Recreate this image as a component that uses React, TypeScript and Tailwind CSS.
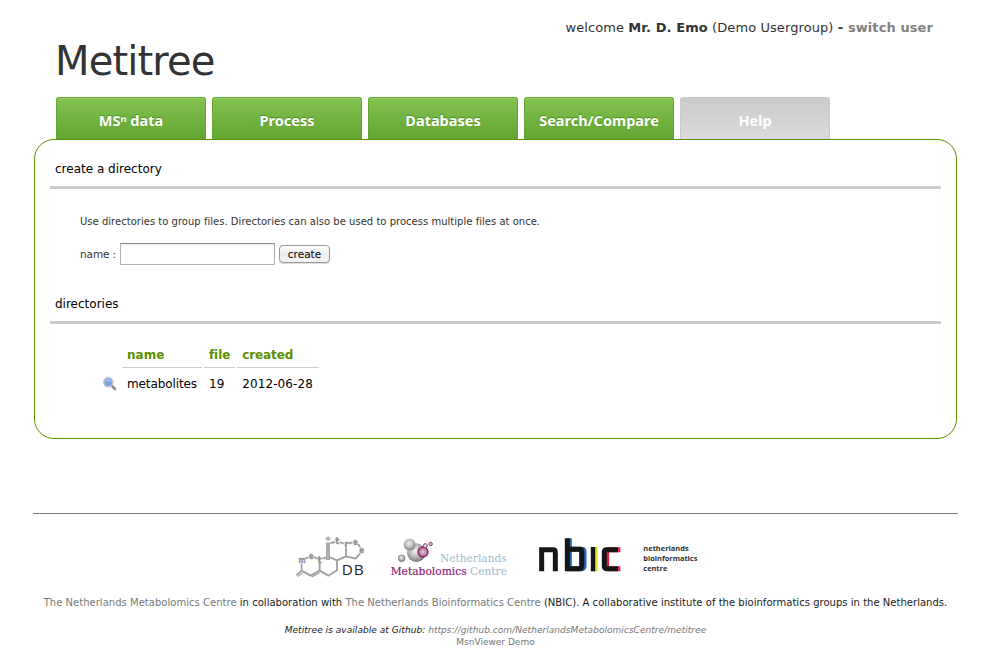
import React from 'react';

const green =
  'border-[#62a52f] bg-gradient-to-b from-[#84c251] to-[#62a530] shadow-[inset_0_1px_0_#96cd68] [text-shadow:0_-1px_1px_#4d8a20]';
const gray = 'border-[#cacaca] bg-gradient-to-b from-[#cacaca] to-[#dadada]';

function Tab({ children, disabled }: { children: React.ReactNode; disabled?: boolean }) {
  return (
    <a
      className={`flex h-[42px] w-[150px] justify-center whitespace-nowrap rounded-t-[3px] border border-b-0 pt-[12px] font-['Noto_Sans',sans-serif] text-[14.5px] font-bold leading-[20px] text-white ${disabled ? gray : green}`}
    >
      {children}
    </a>
  );
}

function Heading({ children }: { children: React.ReactNode }) {
  return (
    <h2 className="h-[31px] border-b-[3px] border-[#cccccc] pl-[5px] text-[12px] leading-[22px] text-black">{children}</h2>
  );
}

function MagnifierIcon() {
  return (
    <svg className="-ml-px h-[16px] w-[16px]" viewBox="0 0 16 16">
      <path d="M9.5 9.5 13 13" stroke="#8d8d8d" strokeWidth="2.6" strokeLinecap="round" />
      <circle cx="6.3" cy="6.2" r="4.6" fill="#78a9e6" stroke="#bfc7d2" strokeWidth="1.5" />
      <path d="M3.7 5.7a3 3 0 0 1 5.2 0" stroke="#a9c9f1" strokeWidth="1.2" fill="none" />
    </svg>
  );
}

function TreeDbLogo() {
  return (
    <svg className="h-[60px] w-[100px]" viewBox="0 0 300 180">
      <g fill="none" stroke="#a0a0a0" strokeWidth="5.5" strokeLinejoin="round">
        <path d="M50 116V137L34 151M50 137L77 152L104 137V114M104 137L130 152L156 136V106L132 96L112 101M60 101L70 97M86 96L96 100" />
        <path d="M156 106L183 94V68M183 94L212 101L226 84M136 54L150 51M164 51L176 56M190 56L202 52M219 57L226 67" />
        <path d="M38 155L53 143M80 156L104 143" strokeWidth="3.5" />
      </g>
      <rect x="124" y="54" width="10" height="50" fill="#b0b0b0" stroke="#999" strokeWidth="2" />
      <ellipse cx="129" cy="41" rx="6" ry="5" fill="#bbb" stroke="#999" strokeWidth="2" />
      <g className="font-['DejaVu_Sans',sans-serif] font-bold" fill="#919191" stroke="#919191" strokeWidth="1" fontSize="26" textAnchor="middle">
        <text x="51" y="115" textLength="21" lengthAdjust="spacingAndGlyphs">m</text>
        <text x="78" y="101" textLength="14" lengthAdjust="spacingAndGlyphs">e</text>
        <text x="104" y="113">t</text>
        <text x="157" y="57">t</text>
        <text x="184" y="67">r</text>
        <text x="211" y="59" textLength="14" lengthAdjust="spacingAndGlyphs">e</text>
        <text x="230" y="84" textLength="14" lengthAdjust="spacingAndGlyphs">e</text>
      </g>
      <text x="170" y="149" fontSize="46" fill="#222" textLength="66" lengthAdjust="spacing" className="font-['Open_Sans',sans-serif]">DB</text>
    </svg>
  );
}

function MetabolomicsLogo() {
  return (
    <svg className="h-[55px] w-[140px]" viewBox="0 0 420 165">
      <defs>
        <radialGradient id="ball" cx=".45" cy=".4" r=".6">
          <stop offset="0" stopColor="#f2f2f2" />
          <stop offset=".55" stopColor="#b9b9bc" />
          <stop offset="1" stopColor="#77777b" />
        </radialGradient>
        <radialGradient id="plum">
          <stop offset="0" stopColor="#d9c8d4" />
          <stop offset="1" stopColor="#a8678f" />
        </radialGradient>
      </defs>
      <circle cx="109" cy="68" r="28" fill="url(#ball)" />
      <circle cx="89" cy="44" r="18" fill="url(#ball)" stroke="#ddd" strokeWidth="1" />
      <circle cx="65" cy="85" r="10" fill="url(#ball)" stroke="#777" strokeWidth="2" />
      <circle cx="129" cy="66" r="15" fill="url(#plum)" stroke="#93206f" strokeWidth="4" />
      <circle cx="136" cy="47" r="6" fill="#ded2db" stroke="#8d3974" strokeWidth="3" />
      <circle cx="152" cy="42" r="5" fill="#e5d2e0" stroke="#93206f" strokeWidth="3" />
      <g className="font-['DejaVu_Serif',serif]" fontSize="31">
        <text x="180" y="95" fill="#9fb9c9" textLength="200" lengthAdjust="spacingAndGlyphs">Netherlands</text>
        <text x="32" y="136" fill="#911b72" stroke="#911b72" strokeWidth=".5" textLength="228" lengthAdjust="spacingAndGlyphs">Metabolomics</text>
        <text x="270" y="136" fill="#9fb9c9" textLength="111" lengthAdjust="spacingAndGlyphs">Centre</text>
      </g>
    </svg>
  );
}

function NbicLogo() {
  return (
    <svg className="h-[50px] w-[180px]" viewBox="0 0 540 150">
      <g fill="none" strokeWidth="15">
        <path d="M118 25V116H155Q162 116 162 109V65Q162 58 155 58H118" stroke="#1769b5" />
        <path d="M196 51V124" stroke="#dbe021" strokeWidth="13" />
        <path d="M271 59H237Q230 59 230 66V109Q230 116 237 116H271" stroke="#e91c43" />
        <path d="M35 124V59H69Q76 59 76 66V124" stroke="#161616" />
        <path d="M112 25V116H148Q155 116 155 109V65Q155 58 148 58H112" stroke="#161616" />
        <path d="M189 51V124" stroke="#161616" strokeWidth="13" />
        <path d="M264 59H230Q223 59 223 66V109Q223 116 230 116H264" stroke="#161616" />
      </g>
      <g className="font-['Open_Sans',sans-serif] font-bold" fontSize="23" fill="#303030">
        <text x="340" y="64" textLength="136" lengthAdjust="spacingAndGlyphs">netherlands</text>
        <text x="340" y="94" textLength="162" lengthAdjust="spacingAndGlyphs">bioinformatics</text>
        <text x="340" y="124" textLength="72" lengthAdjust="spacingAndGlyphs">centre</text>
      </g>
    </svg>
  );
}

export default function App() {
  return (
    <div className="h-[665px] w-[991px] overflow-hidden bg-white font-['DejaVu_Sans',sans-serif] text-[#333]">
      <header className="flex h-[97px] flex-col">
        <div className="mt-[18px] h-[19px] whitespace-nowrap pr-[58px] text-right text-[13px] leading-[20px] tracking-[0.09px]">
          welcome <b>Mr. D. Emo</b> (Demo Usergroup) <b>- <a className="text-[#808080]">switch user</a></b>
        </div>
        <h1 className="ml-[55px] text-[40px] leading-[48px] tracking-[-0.85px]">Metitree</h1>
      </header>

      <nav className="ml-[56px] flex gap-[6px]">
        <Tab>MSⁿ data</Tab>
        <Tab>Process</Tab>
        <Tab>Databases</Tab>
        <Tab>Search/Compare</Tab>
        <Tab disabled>Help</Tab>
      </nav>

      <main className="ml-[34px] h-[300px] w-[923px] rounded-[20px] border border-[#5a8f00] px-[15px] pt-[18px]">
        <Heading>create a directory</Heading>
        <div className="h-[104px] pl-[30px] pt-[25px] text-[10px]">
          <p className="leading-[16px] tracking-[0.02px]">Use directories to group files. Directories can also be used to process multiple files at once.</p>
          <form className="mt-[12px] flex h-[24px] items-center" onSubmit={(e) => e.preventDefault()}>
            <label className="w-[40px] pt-px text-[10.5px] tracking-[-0.1px]">name :</label>
            <input className="h-[22px] w-[155px] border border-[#b0b0b0] border-t-[#8f8f8f] bg-white shadow-[inset_0_1px_1px_#e8e8e8] outline-none" />
            <button className="ml-[4px] h-[18px] w-[51px] rounded-[4px] border border-[#999] bg-gradient-to-b from-white via-[#ececec] to-[#f5f5f5] text-[10.5px] leading-[16px] text-black shadow-[0_1px_0_#ddd]">
              create
            </button>
          </form>
        </div>
        <Heading>directories</Heading>
        <table className="ml-[51px] mt-[16px] border-separate border-spacing-x-[2px] border-spacing-y-0 text-left text-[12px] text-black">
          <thead>
            <tr className="h-[28px] text-[#5a8f00]">
              <th className="w-[17px]" />
              <th className="w-[80px] border-b border-[#ccc] px-[5px] pt-[2px]">name</th>
              <th className="w-[31px] border-b border-[#ccc] px-[5px] pt-[2px] tracking-[-0.1px]">file</th>
              <th className="w-[82px] border-b border-[#ccc] px-[5px] pt-[2px] tracking-[-0.1px]">created</th>
            </tr>
          </thead>
          <tbody>
            <tr className="h-[31px]">
              <td><MagnifierIcon /></td>
              <td className="px-[5px] tracking-[-0.1px]">metabolites</td>
              <td className="px-[5px]">19</td>
              <td className="px-[5px] tracking-[0.1px]">2012-06-28</td>
            </tr>
          </tbody>
        </table>
      </main>

      <footer className="ml-[33px] mt-[74px] w-[925px] whitespace-nowrap border-t border-[#777] text-[10px] text-[#1a1a1a]">
        <div className="ml-[252px] mt-[11px] flex h-[70px]">
          <TreeDbLogo />
          <div className="-ml-[5px] mt-[5px]"><MetabolomicsLogo /></div>
          <div className="ml-[10px] mt-[5px]"><NbicLogo /></div>
        </div>
        <p className="text-center leading-[16px] tracking-[0.027px]">
          <a className="text-[#777]">The Netherlands Metabolomics Centre</a> in collaboration with{' '}
          <a className="text-[#777]">The Netherlands Bioinformatics Centre</a> (NBIC). A collaborative institute of the bioinformatics groups in the Netherlands.
        </p>
        <p className="mt-[13px] text-center text-[9px] italic leading-[12px] tracking-[0.045px]">
          Metitree is available at Github: <a className="text-[#777]">https://github.com/NetherlandsMetabolomicsCentre/metitree</a>
        </p>
        <p className="text-center text-[9px] leading-[12px] text-[#777]">MsnViewer Demo</p>
      </footer>
    </div>
  );
}
